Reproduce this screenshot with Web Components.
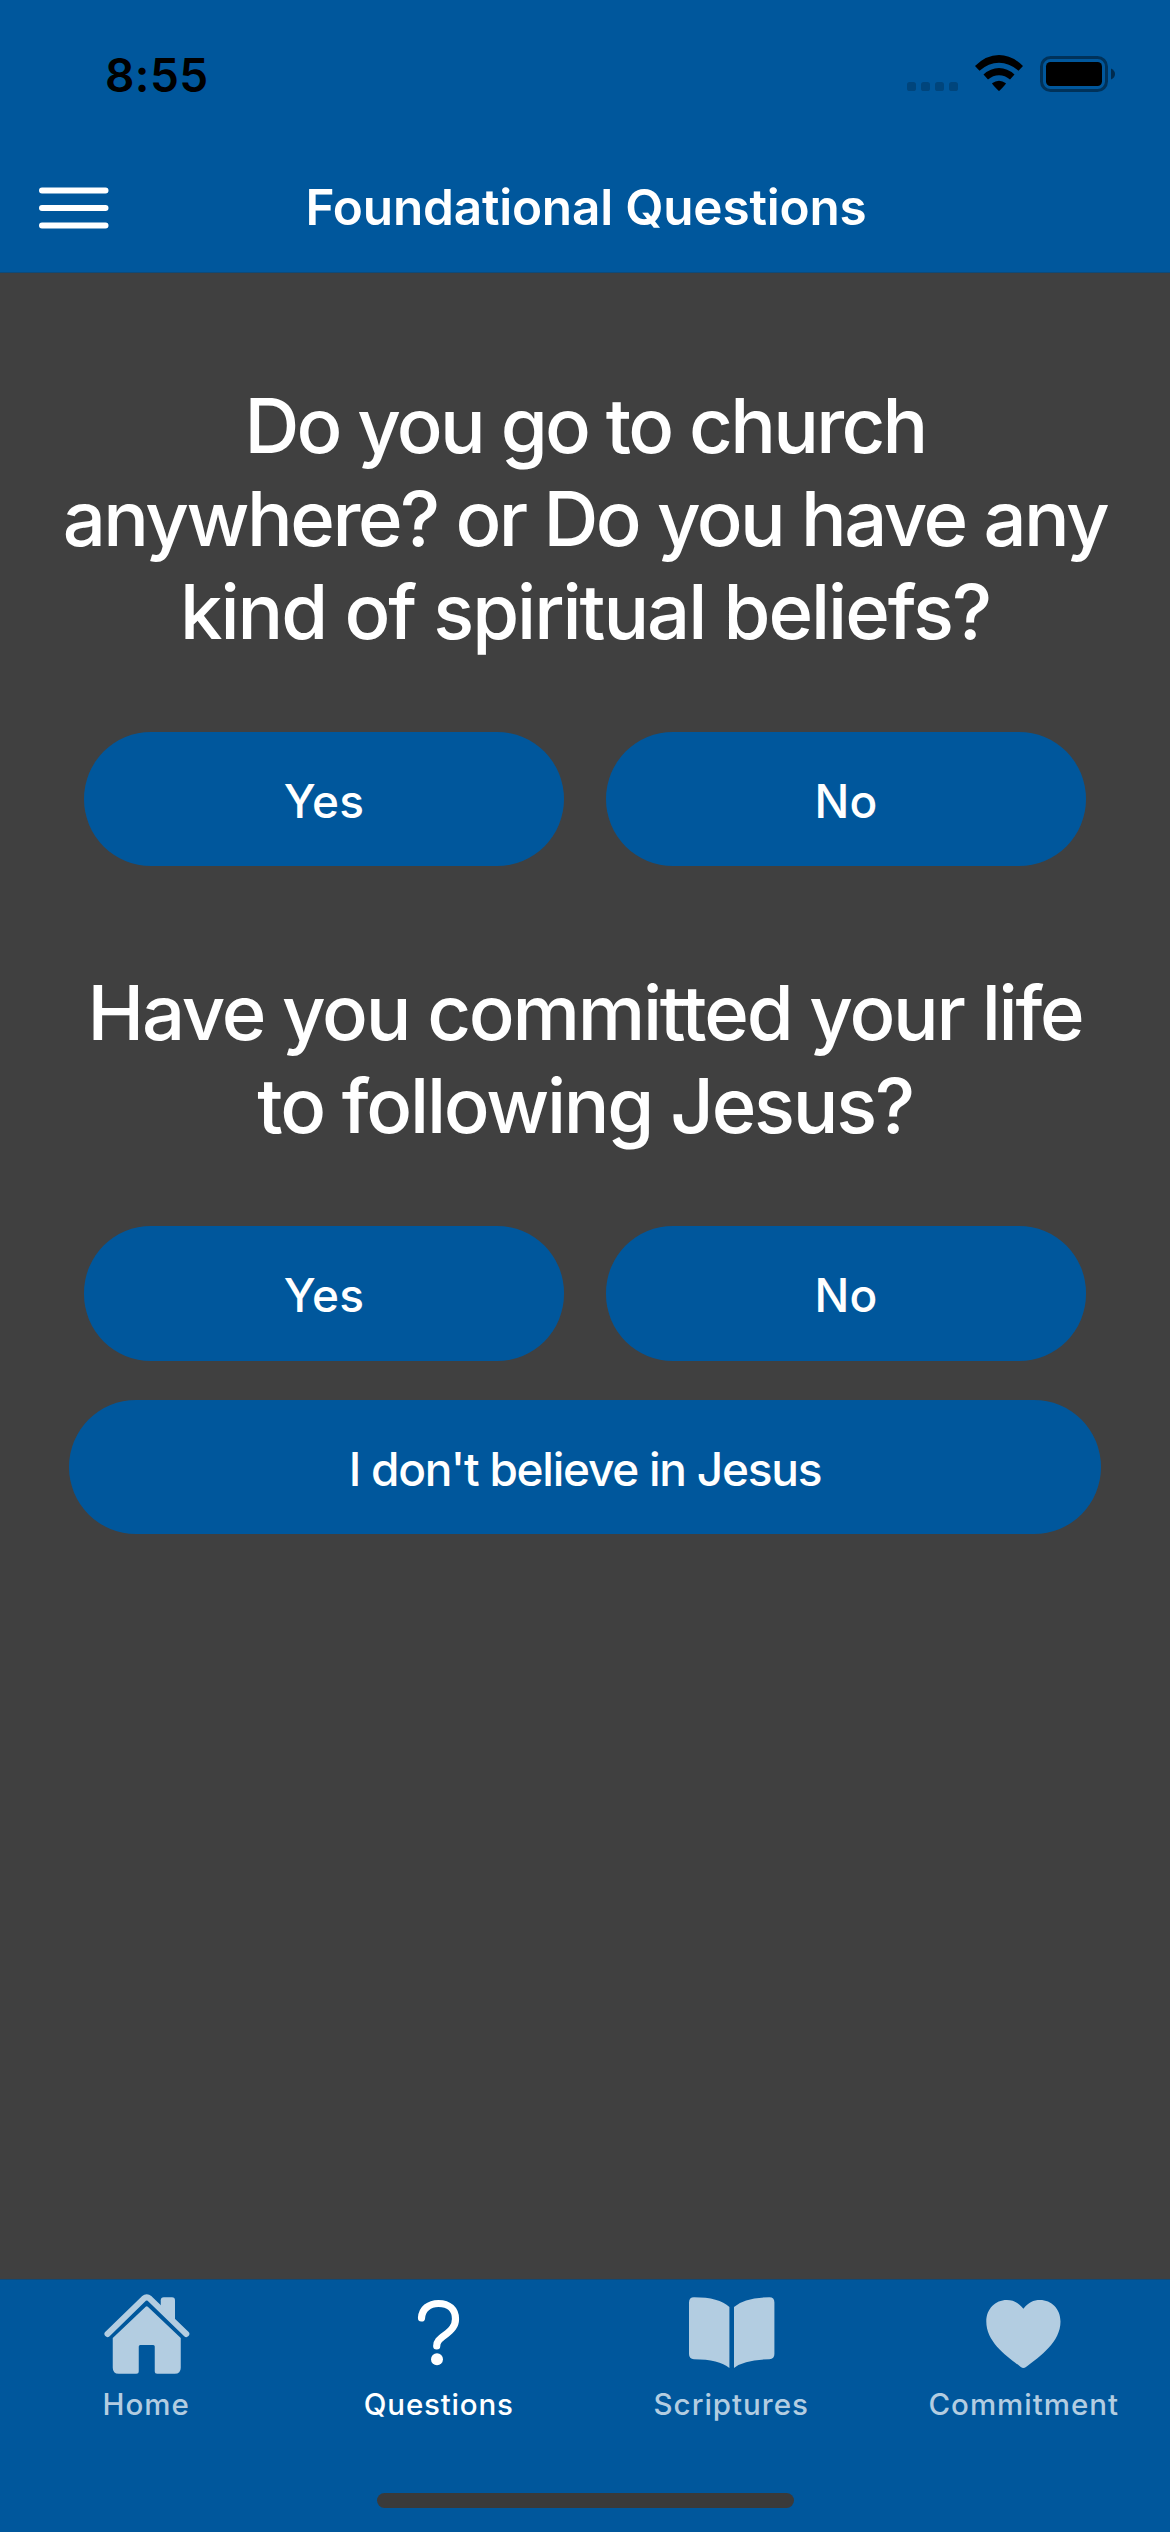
<!DOCTYPE html>
<html lang="en"><head><meta charset="utf-8"><title>Foundational Questions</title>
<style>
html,body{margin:0;padding:0}
body{width:1170px;height:2532px;overflow:hidden;background:#404040;font-family:Inter,"Liberation Sans",sans-serif;color:#fff}
</style></head><body>
<app-screen>
  <status-bar slot="top" time="8:55"></status-bar>
  <nav-bar slot="top">Foundational Questions</nav-bar>
  <question-block>
    <text-line style="--ls:-2.7px">Do you go to church</text-line>
    <text-line style="--ls:-2.5px">anywhere? or Do you have any</text-line>
    <text-line style="--ls:-2.05px">kind of spiritual beliefs?</text-line>
    <pill-button slot="choices">Yes</pill-button>
    <pill-button slot="choices">No</pill-button>
  </question-block>
  <question-block class="second">
    <text-line style="--ls:-2.25px">Have you committed your life</text-line>
    <text-line style="--ls:-2.25px">to following Jesus?</text-line>
    <pill-button slot="choices">Yes</pill-button>
    <pill-button slot="choices">No</pill-button>
    <pill-button slot="extra" style="--ls:-1.25px">I don't believe in Jesus</pill-button>
  </question-block>
  <tab-bar slot="bottom">
    <tab-item icon="home">Home</tab-item>
    <tab-item icon="question" active>Questions</tab-item>
    <tab-item icon="book">Scriptures</tab-item>
    <tab-item icon="heart">Commitment</tab-item>
  </tab-bar>
</app-screen>
<script>
const define=(name,html,setup)=>customElements.define(name,class extends HTMLElement{
  constructor(){super();this.attachShadow({mode:'open'}).innerHTML=html;}
  connectedCallback(){if(setup)setup(this,this.shadowRoot);}
});
define('app-screen',`<style>
:host{display:flex;flex-direction:column;width:1170px;height:2532px;background:#404040}
header{height:272px;background:#00579c;border-bottom:1px solid #0f4a78;flex:none}
main{flex:1}
</style><header><slot name="top"></slot></header><main><slot></slot></main><slot name="bottom"></slot>`);
define('status-bar',`<style>
:host{display:flex;height:141px;color:#000;justify-content:space-between}
time{font-weight:600;font-size:46px;line-height:56px;letter-spacing:.4px;margin:47px 0 0 105px}
svg{display:block;margin:50px 45px 0 0}
</style><time></time>
<svg width="220" height="50" viewBox="905 50 220 50">
<g opacity=".2"><rect x="907" y="82" width="9" height="9" rx="2.6"/><rect x="921" y="82" width="9" height="9" rx="2.6"/><rect x="935" y="82" width="9" height="9" rx="2.6"/><rect x="949" y="82" width="9" height="9" rx="2.6"/></g>
<path d="M975 66Q986 55 999 55Q1012 55 1023 66L1018.500 70.800Q1009.500 62.700 999 62.700Q988.500 62.700 979.500 70.800Z"/>
<path d="M983.500 74.500Q990.500 68 999 68Q1007.500 68 1014.500 74.500L1010 79.600Q1005 75.300 999 75.300Q993 75.300 988 79.600Z"/>
<path d="M992 83.200Q995.500 80.700 999 80.700Q1002.500 80.700 1006 83.200Q1006 84 999.700 90.600Q999 91.200 998.300 90.600Q992 84 992 83.200Z"/>
<rect x="1041.500" y="57.500" width="65" height="33" rx="9" fill="none" stroke="#000" stroke-opacity=".42" stroke-width="3"/>
<rect x="1046" y="62" width="56" height="24" rx="4.500"/>
<path d="M1111 68.500Q1115 70.500 1115 74Q1115 77.500 1111 79.500Z" opacity=".5"/>
</svg>`,(h,r)=>{r.querySelector('time').textContent=h.getAttribute('time')});
define('nav-bar',`<style>
:host{display:grid;grid-template-columns:148px 1fr 148px;height:131px;align-items:center}
svg{margin:2px 0 0 39px;display:block}
h1{margin:0;padding:1px 0 0 2px;text-align:center;font-weight:600;font-size:49.500px;line-height:60px;letter-spacing:-.2px}
</style><svg width="70" height="42" viewBox="0 0 70 42"><g stroke="#fff" stroke-width="6" stroke-linecap="round"><path d="M3 3.500H66.500M3 21H66.500M3 38.500H66.500"/></g></svg><h1><slot></slot></h1>`);
define('text-line',`<style>:host{display:block;height:93px;line-height:93px;letter-spacing:var(--ls,0);white-space:nowrap;text-align:center}</style><slot></slot>`);
define('question-block',`<style>
:host{display:block;padding-top:106px}
:host(.second){padding-top:100px;--row:135px}
.q{font-size:76px;font-weight:500}
.row{display:flex;gap:42px;padding:0 84px;margin-top:74px}
.row ::slotted(*){flex:1;height:var(--row,134px)}
.extra{padding:0 69px;margin-top:39px}
:host(:not(.second)) .extra{display:none}
</style><div class="q"><slot></slot></div><div class="row"><slot name="choices"></slot></div><div class="extra"><slot name="extra"></slot></div>`);
define('pill-button',`<style>
:host{display:flex;box-sizing:border-box;height:134px;padding-top:3px;border-radius:67px;background:#00579c;align-items:center;justify-content:center;font-size:46px;font-weight:450;letter-spacing:var(--ls,.2px)}
</style><slot></slot>`);
define('tab-bar',`<style>
:host{display:flex;flex-direction:column;height:252px;border-top:1px solid #0f4a78;background:#00579c;align-items:center}
nav{display:flex;width:1170px;height:213px}
i{width:417px;height:15px;border-radius:8px;background:#3a3a3a}
</style><nav><slot></slot></nav><i></i>`);
const shapes={
home:`<path d="M4.500 40L40.800 4.600Q43.750 2 46.700 4.600L83.300 40" fill="none" stroke="currentColor" stroke-width="6" stroke-linecap="round" stroke-linejoin="round"/><path d="M57.750 15V6.300Q57.750 3.300 60.750 3.300H69Q72 3.300 72 6.300V29.500Z"/><path d="M42.700 12.800Q43.750 11.900 44.800 12.800L77.750 44V73.700Q77.750 79.700 71.750 79.700H54.250Q51.750 79.700 51.750 77.200V52.500Q51.750 51 50.250 51H37.250Q35.750 51 35.750 52.500V77.200Q35.750 79.700 33.250 79.700H15.750Q9.750 79.700 9.750 73.700V44Z"/>`,
question:`<path d="M25.500 24C26 15 33 9.500 42.500 9.500C53 9.500 59.500 15.500 59.500 25C59.500 32 55.500 36 49 41C43 45.500 40.700 47.500 40.700 52" fill="none" stroke="currentColor" stroke-width="7.200" stroke-linecap="round"/><circle cx="41" cy="65.300" r="6"/>`,
book:`<path d="M6 3.300Q31 3.300 41.400 13V74Q31 65.500 6 65.300Q1 65 1 60V8.500Q1 3.300 6 3.300Z"/><path d="M81.400 3.300Q56.400 3.300 46 13V74Q56.400 65.500 81.400 65.300Q86.400 65 86.400 60V8.500Q86.400 3.300 81.400 3.300Z"/>`,
heart:`<path d="M42.400 14.700C47.400 8.500 52.500 6 59 6C70.500 6 79.500 15 79.500 27.500C79.500 48 59.500 62 45 73Q42.400 74.900 39.800 73C25.300 62 5.300 48 5.300 27.500C5.300 15 14.300 6 25.800 6C32.300 6 37.400 8.500 42.400 14.700Z"/>`};
define('tab-item',`<style>
:host{flex:1;display:flex;flex-direction:column;align-items:center;color:#b3cde1;font-size:29.500px;font-weight:450;letter-spacing:1px;line-height:36px}
:host([active]){color:#fff;font-weight:500;letter-spacing:.8px}
svg{width:86px;height:80px;margin:14px 0 12px;display:block;overflow:visible;fill:currentColor}
</style><svg viewBox="0 0 86 80"></svg><span><slot></slot></span>`,(h,r)=>{r.querySelector('svg').innerHTML=shapes[h.getAttribute('icon')]});
</script></body></html>
